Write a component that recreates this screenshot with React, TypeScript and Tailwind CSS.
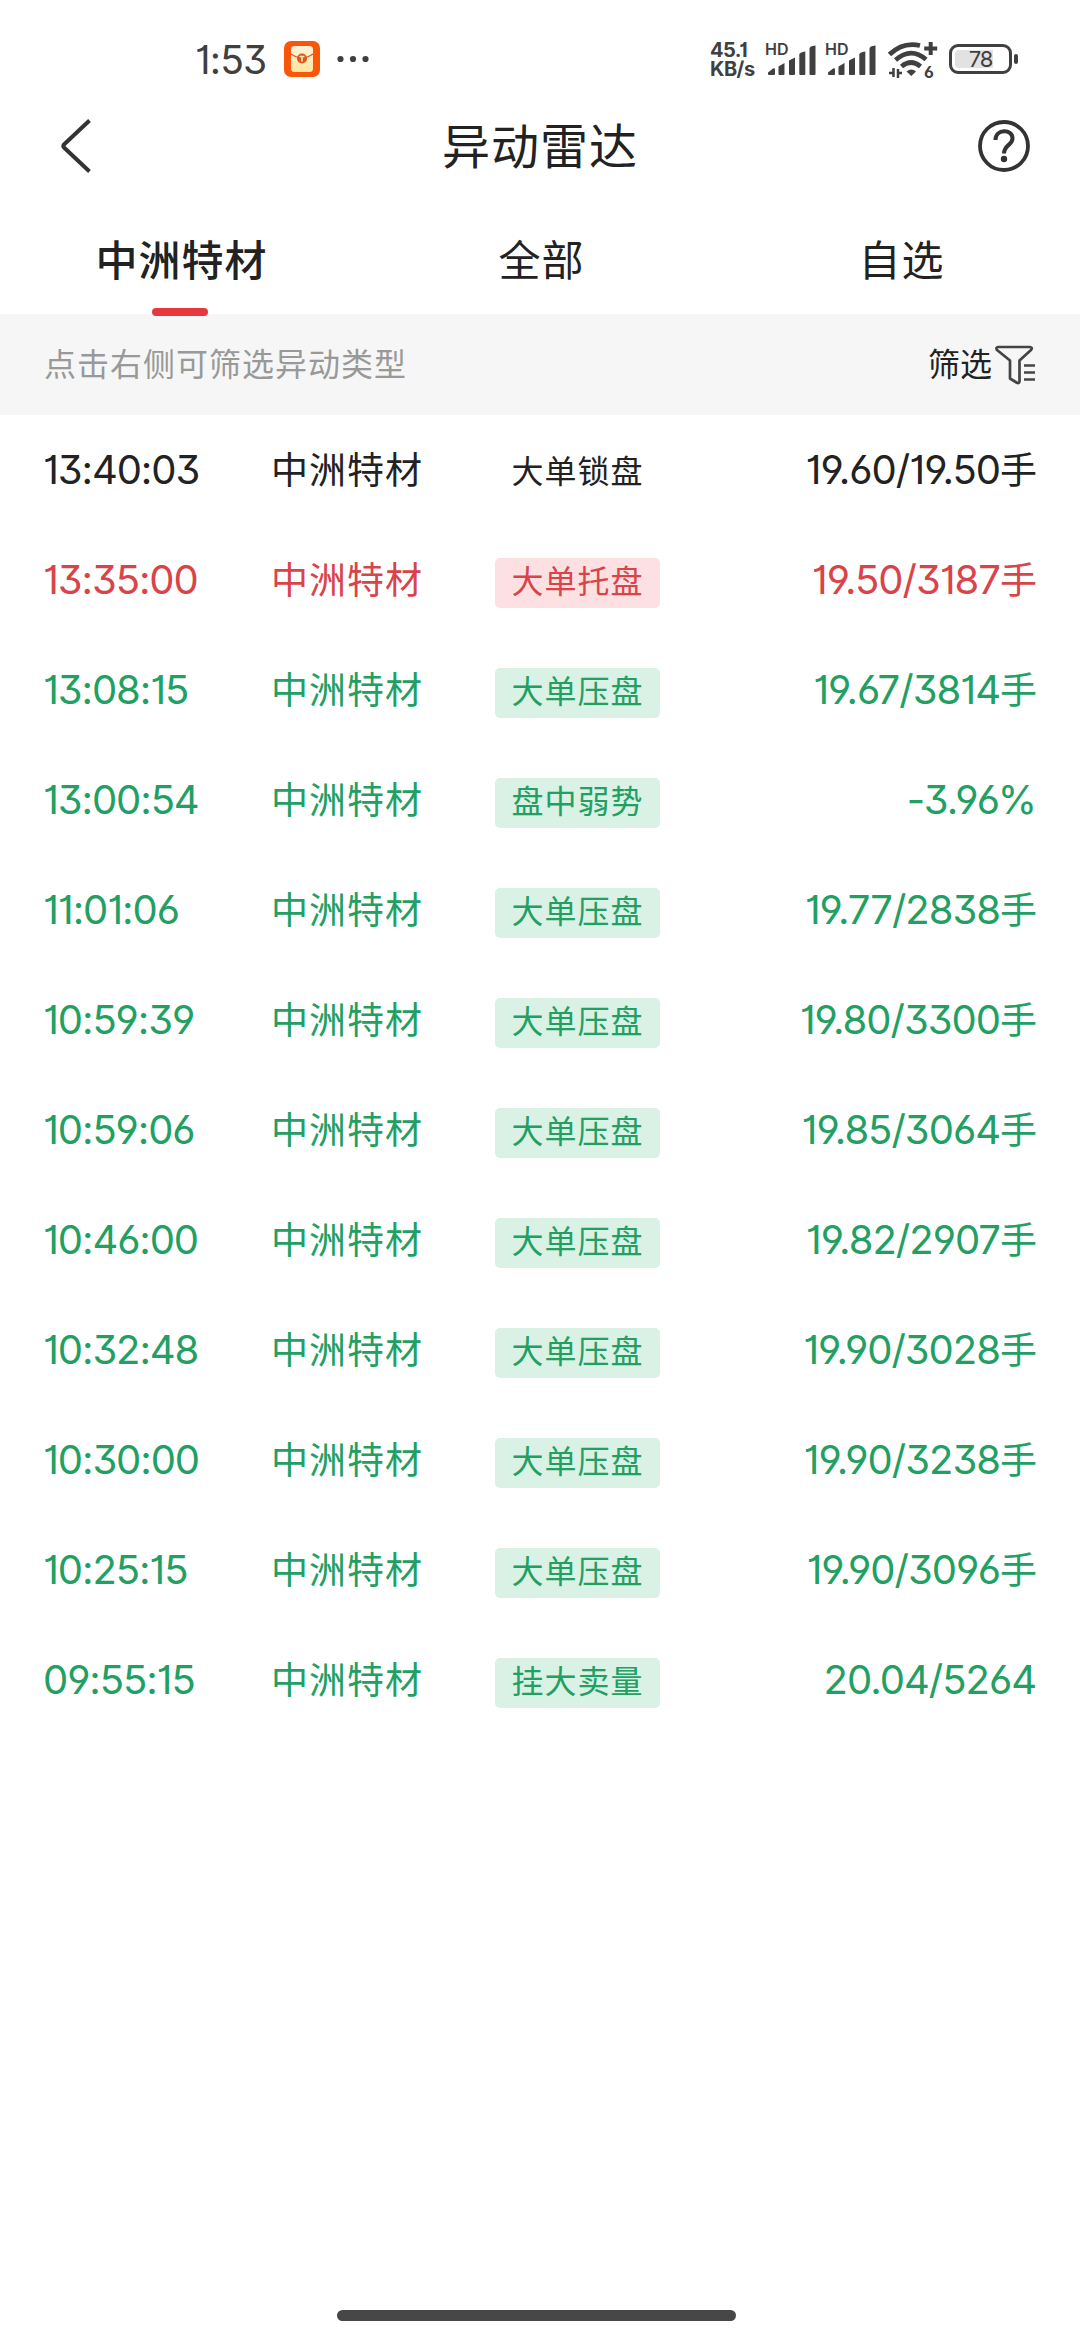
const tabs = ["中洲特材", "全部", "自选"];

const rows = [
    { time: "13:40:03", tag: "大单锁盘", value: "19.60/19.50手", kind: "flat" },
    { time: "13:35:00", tag: "大单托盘", value: "19.50/3187手", kind: "up" },
    { time: "13:08:15", tag: "大单压盘", value: "19.67/3814手", kind: "down" },
    { time: "13:00:54", tag: "盘中弱势", value: "-3.96%", kind: "down" },
    { time: "11:01:06", tag: "大单压盘", value: "19.77/2838手", kind: "down" },
    { time: "10:59:39", tag: "大单压盘", value: "19.80/3300手", kind: "down" },
    { time: "10:59:06", tag: "大单压盘", value: "19.85/3064手", kind: "down" },
    { time: "10:46:00", tag: "大单压盘", value: "19.82/2907手", kind: "down" },
    { time: "10:32:48", tag: "大单压盘", value: "19.90/3028手", kind: "down" },
    { time: "10:30:00", tag: "大单压盘", value: "19.90/3238手", kind: "down" },
    { time: "10:25:15", tag: "大单压盘", value: "19.90/3096手", kind: "down" },
    { time: "09:55:15", tag: "挂大卖量", value: "20.04/5264", kind: "down" },
];

const textColor: Record<string, string> = {
    flat: "text-[#222222]",
    up: "text-[#d9444a]",
    down: "text-[#22a063]",
};

const tagColor: Record<string, string> = {
    flat: "",
    up: "bg-[#fce0e2]",
    down: "bg-[#daf1e5]",
};

function Signal() {
    return (
        <div className="relative w-[50px] h-[34px]">
            <span className="absolute left-[-1px] top-[-1px] text-[16px] leading-[16px] font-semibold">
                HD
            </span>
            <svg className="absolute left-0 top-0" width="50" height="34" fill="#404040">
                <path d="M2 30.5 7 26.5Q9 25.500 9 27.500V32Q9 33 8 33H3Q2 33 2 32Z" />
                <path d="M12.500 24.500 18.500 21V32Q18.500 33 17.500 33H13.500Q12.500 33 12.500 32Z" />
                <path d="M23 18.500 29 15.500V32Q29 33 28 33H24Q23 33 23 32Z" />
                <path d="M33.300 12.500Q33.300 10.500 39.300 9.500V32Q39.300 33 38.300 33H34.300Q33.300 33 33.300 32Z" />
                <path d="M43.500 6.500Q43.500 4 49.500 3.500V32Q49.500 33 48.500 33H44.500Q43.500 33 43.500 32Z" />
            </svg>
        </div>
    );
}

function StatusBar() {
    return (
        <div className="h-[92px] shrink-0 flex justify-between pl-[195px] pr-[68px] text-[#404040]">
            <div className="flex items-center h-[118px]">
                <span className="w-[89px] text-[39px] leading-none tracking-[-0.8px]">1:53</span>
                <svg width="36" height="36" viewBox="0 0 36 36">
                    <defs>
                        <linearGradient id="envelope" x1="0" y1="0" x2="0" y2="1">
                            <stop offset="0" stopColor="#fdf3dc" />
                            <stop offset="1" stopColor="#fde59a" />
                        </linearGradient>
                    </defs>
                    <rect width="36" height="36" rx="7" fill="#f9560c" />
                    <rect x="7" y="5" width="22" height="26" rx="3.500" fill="url(#envelope)" />
                    <path d="M7 13Q13 17 18 17T29 13" fill="none" stroke="#e0541a" strokeWidth="1.300" />
                    <circle cx="18" cy="17.500" r="5" fill="#e0541a" />
                    <path d="M15.500 15.500h5M18 15.500v5" stroke="#fdeac0" strokeWidth="1.500" />
                </svg>
                <svg className="ml-[17px]" width="32" height="8" fill="#404040">
                    <circle cx="3.500" cy="4" r="3.100" />
                    <circle cx="16" cy="4" r="3.100" />
                    <circle cx="28.500" cy="4" r="3.100" />
                </svg>
            </div>
            <div className="flex items-start pt-[42px]">
                <div className="w-[56px] mt-[-1px] text-[20px] leading-[19px] font-bold tracking-[-0.5px]">
                    <div>45.1</div>
                    <div>KB/s</div>
                </div>
                <Signal />
                <div className="ml-[10px]">
                    <Signal />
                </div>
                <div className="relative ml-[12px] w-[52px] h-[37px]">
                    <svg width="52" height="37" viewBox="0 0 52 37" fill="none" stroke="#404040">
                        <path d="M1.500 12.500Q15 -0.500 32 3.500" strokeWidth="4.800" />
                        <path d="M7.500 18Q23 4.500 38 17.500" strokeWidth="4.800" />
                        <path d="M13.500 24.500Q23 16.500 32.500 24.500" strokeWidth="4.800" />
                        <path d="M18.500 29.500Q23.500 25.500 28 29.500L23.300 34Z" fill="#404040" stroke="none" />
                        <path d="M42.700 0v13M36.200 6.500h13" strokeWidth="4" />
                        <path d="M5.500 26v9M1 31h4M10 36v-9M14 31h-4" strokeWidth="2.500" />
                    </svg>
                    <span className="absolute left-[36px] top-[22px] text-[16px] leading-[16px] font-bold">6</span>
                </div>
                <div className="relative ml-[9px] mt-[2px] w-[63px] h-[30px] rounded-[9px] border-[3px] border-[#404040] p-[3px]">
                    <div className="w-[38px] h-[18px] rounded-l-[4px] bg-[#e2e2e2]" />
                    <span className="absolute left-0 top-0 w-[57px] h-6 text-center text-[22px] leading-6 tracking-[-1px]">
                        78
                    </span>
                    <span className="absolute left-[62px] top-[7px] w-[4px] h-[10px] rounded-[2px] bg-[#404040]" />
                </div>
            </div>
        </div>
    );
}

export default function App() {
    return (
        <div className="w-[1080px] h-[2340px] flex flex-col bg-white overflow-hidden text-[#222222] font-['Inter','Noto_Sans_CJK_SC',sans-serif] [font-feature-settings:'cv01','cv03','cv04','cv09']">
            <StatusBar />

            {/* Header */}
            <header className="h-[108px] shrink-0 flex items-center justify-between pl-[61px] pr-[50px]">
                <svg width="41" height="54" viewBox="0 0 41 54" fill="none" stroke="#333333" strokeWidth="4">
                    <path d="M28.500 1.500 3 25.500Q1.500 27 3 28.500L28.500 52.500" />
                </svg>
                <h1 className="text-[48px] leading-none tracking-[1px] pt-[2px]">异动雷达</h1>
                <svg width="52" height="52" viewBox="0 0 52 52" fill="none" stroke="#333333" strokeWidth="3.800">
                    <circle cx="26" cy="26" r="24" />
                    <path d="M17.500 20C17.500 8.500 34.500 8.500 34.500 18.500C34.500 25 26 25 26 33.500" strokeWidth="4" />
                    <circle cx="26" cy="39" r="3.200" fill="#333333" stroke="none" />
                </svg>
            </header>

            {/* Tabs */}
            <nav className="h-[114px] shrink-0 flex">
                {tabs.map((tab, index) => (
                    <div key={tab} className="relative flex-1 flex items-center justify-center pt-[8px] pl-[3px]">
                        <span
                            className={
                                index === 0
                                    ? "text-[42px] leading-none tracking-[1px] font-medium"
                                    : "text-[42px] leading-none tracking-[1px]"
                            }
                        >
                            {tab}
                        </span>
                        {index === 0 && (
                            <span className="absolute left-[152px] bottom-[-2px] w-[56px] h-[8px] rounded-full bg-[#e5393f]" />
                        )}
                    </div>
                ))}
            </nav>

            {/* Filter hint */}
            <div className="h-[101px] shrink-0 flex items-center justify-between pl-[44px] pr-[45px] bg-[#f6f6f6]">
                <span className="text-[32px] leading-none tracking-[1px] text-[#999999]">
                    点击右侧可筛选异动类型
                </span>
                <div className="flex items-center">
                    <span className="text-[32px] leading-none">筛选</span>
                    <svg className="ml-[3px]" width="40" height="40" viewBox="0 0 40 40" fill="none" stroke="#444444" strokeWidth="2.700">
                        <path
                            d="M3 2H35Q38 2.500 36 5L24.500 15.500V36.500Q24 39 21.500 37.500L15 33.500V15.500L2 5Q0.500 2.500 3 2Z"
                            strokeLinejoin="round"
                        />
                        <path d="M29 20.500h11M29 27.500h11M29 34.500h11" />
                    </svg>
                </div>
            </div>

            {/* Records */}
            <div>
                {rows.map((row) => (
                    <div
                        key={row.time}
                        className={`h-[110px] flex items-center pl-[43px] pr-[44px] whitespace-nowrap ${textColor[row.kind]}`}
                    >
                        <span className="w-[228px] text-[40px] leading-none tracking-[-1.1px]">{row.time}</span>
                        <span className="w-[224px] text-[37px] leading-none tracking-[1px]">中洲特材</span>
                        <span
                            className={`mt-[6px] pb-[2px] w-[165px] h-[50px] flex items-center justify-center rounded-[5px] text-[32px] leading-none tracking-[1px] ${tagColor[row.kind]}`}
                        >
                            {row.tag}
                        </span>
                        <span className="flex-1 text-right text-[40px] leading-none tracking-[-1px]">
                            {row.value.replace("手", "")}
                            {row.value.endsWith("手") && <span className="text-[37px]">手</span>}
                        </span>
                    </div>
                ))}
            </div>

            {/* Home indicator */}
            <div className="mt-auto mb-[19px] w-[399px] h-[11px] self-center shrink-0 rounded-full bg-[#474747] mr-[7px]" />
        </div>
    );
}
